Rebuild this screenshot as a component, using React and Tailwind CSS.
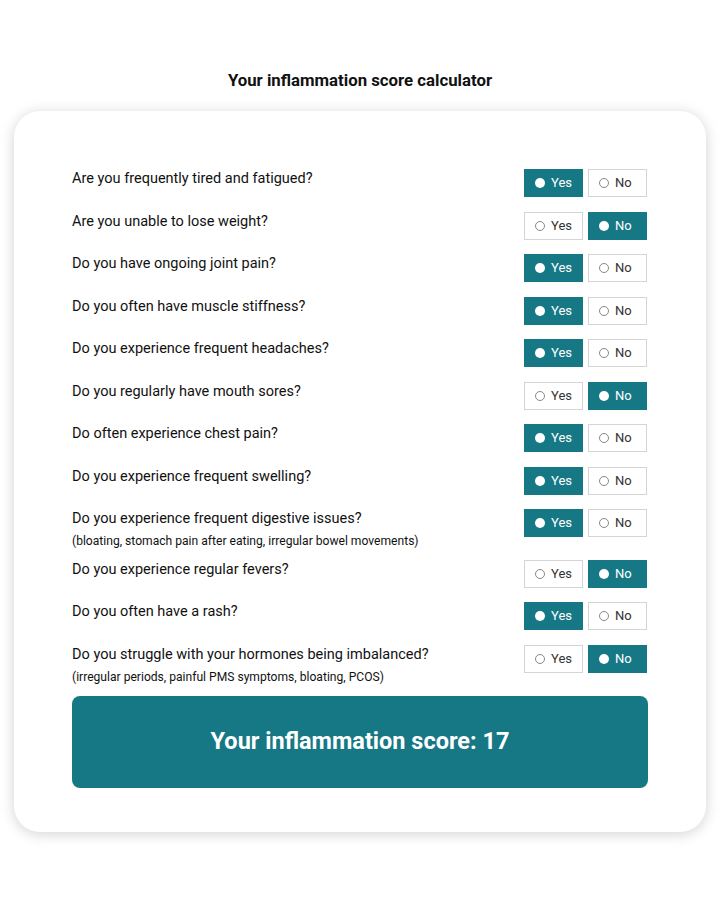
import { useState } from "react";

const QUESTIONS = [
  { q: "Are you frequently tired and fatigued?", a: "yes" },
  { q: "Are you unable to lose weight?", a: "no" },
  { q: "Do you have ongoing joint pain?", a: "yes" },
  { q: "Do you often have muscle stiffness?", a: "yes" },
  { q: "Do you experience frequent headaches?", a: "yes" },
  { q: "Do you regularly have mouth sores?", a: "no" },
  { q: "Do often experience chest pain?", a: "yes" },
  { q: "Do you experience frequent swelling?", a: "yes" },
  {
    q: "Do you experience frequent digestive issues?",
    sub: "(bloating, stomach pain after eating, irregular bowel movements)",
    a: "yes",
  },
  { q: "Do you experience regular fevers?", a: "no" },
  { q: "Do you often have a rash?", a: "yes" },
  {
    q: "Do you struggle with your hormones being imbalanced?",
    sub: "(irregular periods, painful PMS symptoms, bloating, PCOS)",
    a: "no",
  },
];

function Choice({ label, active, onClick }) {
  return (
    <button
      onClick={onClick}
      className={`flex items-center h-[28px] w-[59px] pl-[10px] gap-[6px] text-[13px] border ${
        active ? "bg-[#177885] border-[#177885] text-white" : "bg-white border-[#d4d4d4] text-[#333]"
      }`}
    >
      <span
        className={`w-[10px] h-[10px] rounded-full ${
          active ? "bg-white" : "border border-[#888] bg-white"
        }`}
      />
      {label}
    </button>
  );
}

export default function App() {
  const [answers, setAnswers] = useState(QUESTIONS.map((x) => x.a));
  const score = 17;

  const setAnswer = (i, v) => setAnswers((prev) => prev.map((a, j) => (j === i ? v : a)));

  return (
    <div className="min-h-[900px] bg-white pt-[68px] font-['Roboto',sans-serif]">
      <h1 className="text-center text-[16.8px] font-bold text-[#111] leading-[24px]">
        Your inflammation score calculator
      </h1>
      <div className="mx-[14px] mt-[19px] bg-white rounded-[26px] shadow-[0_2px_14px_rgba(0,0,0,0.18)] px-[58px] pt-[58px] pb-[44px]">
        <div className="flex flex-col gap-[14.5px]">
          {QUESTIONS.map((item, i) => (
            <div key={i} className="flex items-start justify-between">
              <div>
                <div className="text-[14.5px] leading-[20px] text-[#111]">{item.q}</div>
                {item.sub && (
                  <div className="text-[12.1px] leading-[14px] mt-[5px] mb-[-3px] text-[#111]">{item.sub}</div>
                )}
              </div>
              <div className="flex gap-[5px] mr-[1px]">
                <Choice label="Yes" active={answers[i] === "yes"} onClick={() => setAnswer(i, "yes")} />
                <Choice label="No" active={answers[i] === "no"} onClick={() => setAnswer(i, "no")} />
              </div>
            </div>
          ))}
        </div>
        <div className="mt-[15px] h-[92px] rounded-[8px] bg-[#177885] flex items-center justify-center">
          <span className="text-white text-[23.5px] font-bold">
            Your inflammation score: {score}
          </span>
        </div>
      </div>
    </div>
  );
}
